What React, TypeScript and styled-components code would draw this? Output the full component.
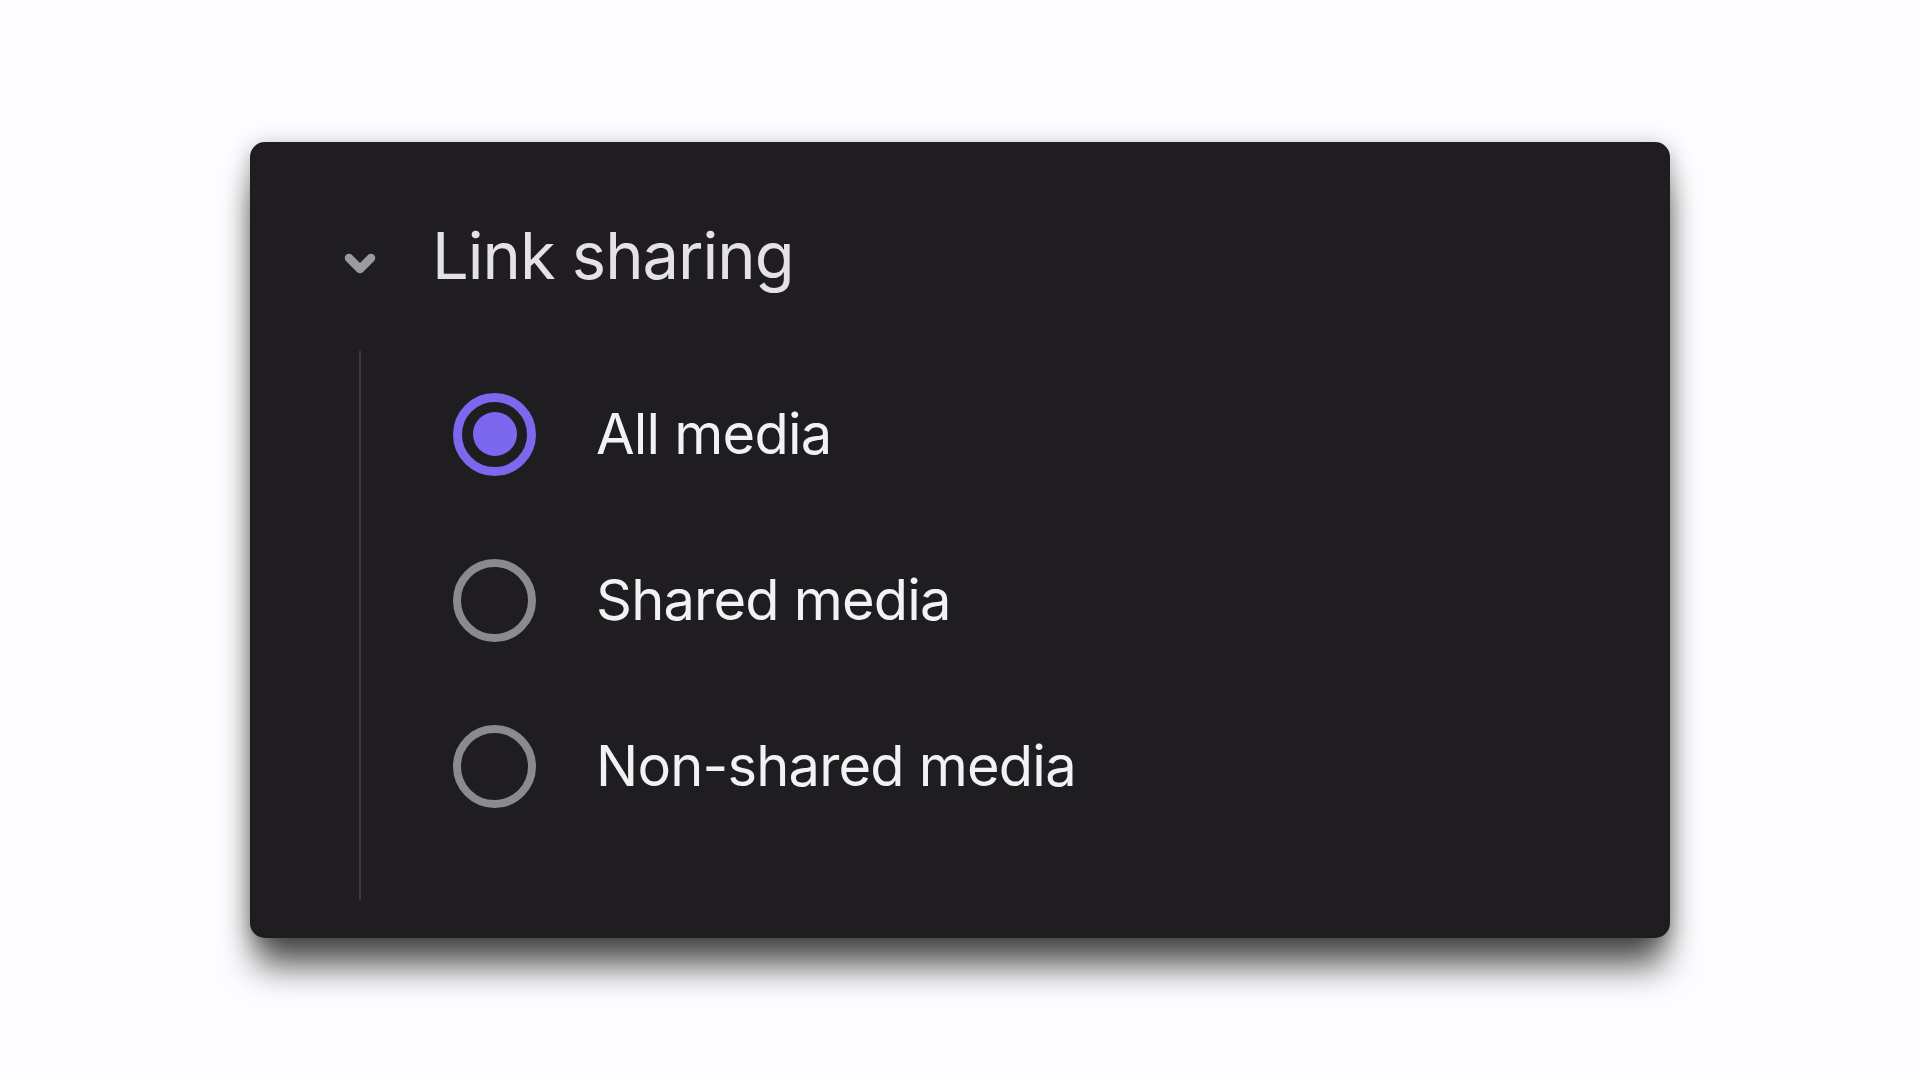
import styled, { createGlobalStyle } from "styled-components";
import { useState } from "react";

const GlobalStyle = createGlobalStyle`
  html, body {
    margin: 0;
    padding: 0;
    background: #fdfcfe;
  }
  body {
    font-family: Inter, "Noto Sans", sans-serif;
  }
`;

const options = ["All media", "Shared media", "Non-shared media"];

function Chevron() {
  return (
    <ChevronIcon width="34" height="26" viewBox="0 0 34 26">
      <path
        d="M6 7 L17 18 L28 7"
        fill="none"
        stroke="#9b9a9d"
        strokeWidth="8.5"
        strokeLinecap="round"
        strokeLinejoin="round"
      />
    </ChevronIcon>
  );
}

export default function App() {
  const [selected, setSelected] = useState(0);
  return (
    <>
      <GlobalStyle />
      <Page>
        <Card>
          <Header>
            <Chevron />
            <Title>Link sharing</Title>
          </Header>
          <Body>
            {options.map((label, i) => (
              <Option key={label} onClick={() => setSelected(i)}>
                <Radio checked={selected === i}>
                  {selected === i && <Dot />}
                </Radio>
                <Label>{label}</Label>
              </Option>
            ))}
          </Body>
        </Card>
      </Page>
    </>
  );
}

const Page = styled.div`
  width: 1920px;
  height: 1080px;
  padding: 142px 0 0 250px;
  box-sizing: border-box;
`;

const Card = styled.div`
  width: 1420px;
  height: 796px;
  box-sizing: border-box;
  padding: 81px 0 0 93px;
  background: #1f1d20;
  border-radius: 15px;
  box-shadow: 0 34px 34px -6px rgba(0, 0, 0, 0.65),
    0 4px 22px rgba(0, 0, 0, 0.3);
`;

const Header = styled.div`
  display: flex;
  align-items: center;
  height: 66px;
  gap: 55px;
`;

const ChevronIcon = styled.svg`
  display: block;
  flex-shrink: 0;
  margin-top: 16px;
`;

const Title = styled.h1`
  margin: 0;
  font-size: 65px;
  line-height: 66px;
  font-weight: 400;
  color: #e4e2e6;
  letter-spacing: -1px;
`;

const Body = styled.div`
  margin: 62px 0 0 16px;
  border-left: 2px solid #3d3b3f;
  height: 549px;
  padding-left: 92px;
  box-sizing: border-box;
`;

const Option = styled.div`
  display: flex;
  align-items: center;
  height: 166px;
  gap: 60px;
  cursor: pointer;
`;

const Radio = styled.div<{ checked: boolean }>`
  width: 83px;
  height: 83px;
  box-sizing: border-box;
  border-radius: 50%;
  border: ${(p) => (p.checked ? "9px solid #7b68ee" : "8px solid #8b8a8d")};
  display: flex;
  align-items: center;
  justify-content: center;
  flex-shrink: 0;
`;

const Dot = styled.div`
  width: 44px;
  height: 44px;
  border-radius: 50%;
  background: #7b68ee;
`;

const Label = styled.span`
  font-size: 56px;
  color: #f2f1f3;
  letter-spacing: -0.8px;
`;
